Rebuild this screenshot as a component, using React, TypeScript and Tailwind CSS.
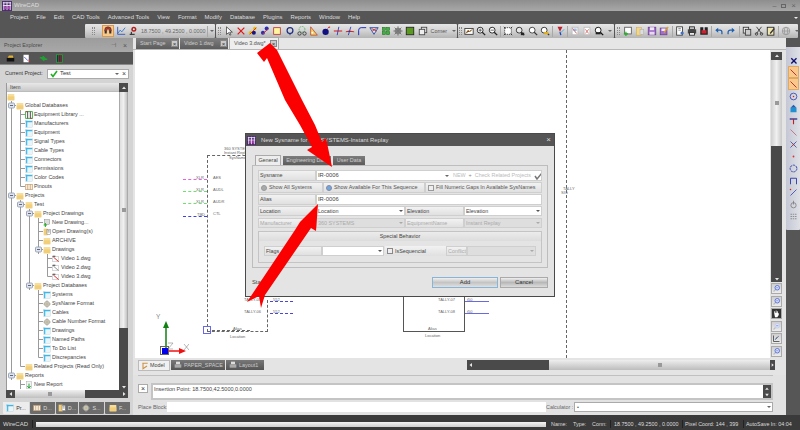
import React from "react";

const S = ({ s = 10, children }: { s?: number; children: React.ReactNode }) => (
  <svg width={s} height={s} viewBox="0 0 12 12" className="block shrink-0">{children}</svg>
);

const icons: Record<string, React.ReactNode> = {
  magnet: <><path d="M2 6V5a4 4 0 0 1 8 0v1h-2.500V5a1.500 1.500 0 0 0-3 0v1z" fill="#c0392b" stroke="#222" strokeWidth=".6"/><rect x="2" y="6" width="2.500" height="3" fill="#333"/><rect x="7.500" y="6" width="2.500" height="3" fill="#333"/></>,
  graph: <><path d="M2 1v9h9" stroke="#2a4fc0" fill="none" strokeWidth="1"/><path d="M2 9l3-4 2 2 4-5" stroke="#2a6fd0" fill="none" strokeWidth="1"/></>,
  magnetR: <><circle cx="7" cy="4" r="3" fill="#b02020"/><circle cx="7" cy="4" r="1.200" fill="#eee"/><path d="M2 10h6M4 7v3" stroke="#222" strokeWidth="1.200"/></>,
  cursor: <path d="M3 1v9l2.500-2 1.500 3 1.300-.6-1.500-3H10z" fill="#fff" stroke="#222" strokeWidth=".8"/>,
  x: <path d="M2 2l8 8M10 2l-8 8" stroke="#e01515" strokeWidth="1.400"/>,
  d1: <><circle cx="8" cy="3" r="2" fill="#f0c000"/><circle cx="3" cy="8" r="2" fill="#e8c000"/><circle cx="7" cy="8" r="2.400" fill="#151580"/><path d="M2 10l8-8" stroke="#d02020"/></>,
  d2: <><circle cx="8" cy="3" r="2.400" fill="#2030c0"/><circle cx="3.500" cy="8" r="2.400" fill="#2030c0"/><path d="M3 10l7-7" stroke="#e02020" strokeWidth="1.200"/></>,
  note: <rect x="2" y="2" width="8" height="8" fill="#fff6a0" stroke="#c03030"/>,
  ring: <><circle cx="6" cy="5.500" r="3.500" fill="none" stroke="#203080" strokeWidth="1.500"/><path d="M6 9v2" stroke="#203080"/></>,
  bike: <><circle cx="6" cy="4" r="3.500" fill="none" stroke="#30a040" strokeDasharray="1 1"/><circle cx="3" cy="9" r="2" fill="none" stroke="#333"/><circle cx="9" cy="9" r="2" fill="none" stroke="#333"/></>,
  tri: <><path d="M2 1l8 10H2z" fill="#f3d060" stroke="#b03020" strokeWidth=".8"/><rect x="3" y="7" width="2" height="2" fill="#fff"/></>,
  bomb: <><circle cx="5.500" cy="7" r="3.800" fill="#101080"/><path d="M8 3l2-2" stroke="#d03030" strokeWidth="1.200"/><circle cx="10" cy="1.500" r="1" fill="#e04040"/></>,
  cross: <><path d="M1 6h10" stroke="#e01515" strokeWidth="1.200"/><path d="M7 1L5 11" stroke="#2030c0" strokeWidth="1"/></>,
  bend: <><path d="M1 7l4-1 6 1" stroke="#e01515"/><path d="M7 1L4 11" stroke="#2030c0"/></>,
  arc: <path d="M2 11V5a3 3 0 0 1 3-3h6" stroke="#2030c0" fill="none" strokeWidth="1.200"/>,
  shield: <><path d="M1 2h10L6 10z" fill="#cfe8f5" stroke="#2040a0"/><path d="M3 3l6 3M9 3L4 6" stroke="#d02020"/></>,
  grid: <><rect x="1.500" y="1.500" width="4" height="4" fill="#40b040" stroke="#186018" strokeWidth=".5"/><rect x="6.500" y="1.500" width="4" height="4" fill="#40b040" stroke="#186018" strokeWidth=".5"/><rect x="1.500" y="6.500" width="4" height="4" fill="#40b040" stroke="#186018" strokeWidth=".5"/><rect x="6.500" y="6.500" width="4" height="4" fill="#40b040" stroke="#186018" strokeWidth=".5"/></>,
  gear: <><circle cx="6" cy="6" r="4" fill="#888"/><path d="M6 .5v11M.5 6h11M2 2l8 8M10 2l-8 8" stroke="#777" strokeWidth="1.200"/></>,
  sq: <><rect x="1.500" y="1.500" width="9" height="9" fill="#5a9a20" stroke="#222"/></>,
  layers: <><rect x="4" y="1.500" width="6.500" height="6.500" fill="#ddd" stroke="#444"/><rect x="1.500" y="4" width="6.500" height="6.500" fill="#eee" stroke="#444"/></>,
  rule: <><rect x="1" y="3" width="10" height="7" fill="#fff" stroke="#333"/><path d="M2 9l3-4 2 2 3-3" stroke="#c07010"/></>,
  zin: <><circle cx="5" cy="5" r="3.500" fill="#fff" stroke="#222" strokeWidth="1.100"/><path d="M7.500 7.500l3.500 3.500" stroke="#222" strokeWidth="1.500"/><path d="M3 5h4M5 3v4" stroke="#222" strokeWidth=".8"/></>,
  zout: <><circle cx="5" cy="5" r="3.500" fill="#fff" stroke="#222" strokeWidth="1.100"/><path d="M7.500 7.500l3.500 3.500" stroke="#222" strokeWidth="1.500"/><path d="M3 5h4" stroke="#222" strokeWidth=".8"/></>,
  frame: <><rect x="2" y="2" width="8" height="8" fill="#fff" stroke="#333" strokeDasharray="1.500 1"/><path d="M1 1l2 2M11 1L9 3M1 11l2-2M11 11L9 9" stroke="#222"/></>,
  zbk: <><circle cx="5" cy="5" r="3.500" fill="#e8e8e8" stroke="#222"/><path d="M7.500 7.500l3.500 3.500" stroke="#222" strokeWidth="1.500"/><rect x="7" y="8" width="4" height="3" fill="#222"/></>,
  zw: <><circle cx="5" cy="5" r="3.500" fill="#fff" stroke="#333"/><path d="M7.500 7.500l3.500 3.500" stroke="#333" strokeWidth="1.300"/></>,
  zy: <><circle cx="5" cy="5" r="3.500" fill="#fff" stroke="#222"/><path d="M7.500 7.500l3.500 3.500" stroke="#222" strokeWidth="1.300"/><rect x="5" y="7" width="5" height="3" fill="#e0b020"/></>,
  prop: <><path d="M3 1l3 6 3-6z" fill="#c02030"/><path d="M6 7l1 4" stroke="#2040c0" strokeWidth="1.500"/><path d="M7 8l4-4" stroke="#30b0d0"/></>,
  page1: <><rect x="2.500" y="1.500" width="7" height="9" fill="#fff" stroke="#bbb"/><path d="M3 3l5 6" stroke="#d04040"/><rect x="4" y="3" width="4" height="3" fill="#6090d0" opacity=".6"/></>,
  page2: <><rect x="2.500" y="1.500" width="7" height="9" fill="#fff" stroke="#bbb"/><path d="M4 4l4 5M8 4l-4 5" stroke="#d06060"/></>,
  zoomb: <><circle cx="5" cy="5" r="3.500" fill="#fff" stroke="#111" strokeWidth="1.100"/><path d="M7.500 7.500l3.500 3.500" stroke="#111" strokeWidth="1.500"/><rect x="2" y="7.500" width="6" height="2.500" fill="#222"/></>,
  newd: <><rect x="2" y="1.500" width="8" height="8" fill="#fff" stroke="#555"/><path d="M1 9.500h5M3.500 7v5" stroke="#20b020" strokeWidth="1.400"/></>,
  open: <><rect x="1.500" y="2" width="6" height="9" fill="#f2d68a" stroke="#c8a850" strokeWidth=".6"/><rect x="6" y="4" width="4.500" height="6" fill="#ddd" stroke="#aaa" strokeWidth=".6"/></>,
  save: <><rect x="1.500" y="1.500" width="9" height="9" fill="#a070c8" stroke="#704098"/><rect x="3.500" y="1.500" width="5" height="3.500" fill="#f0e8f8"/><rect x="3" y="7" width="6" height="3.500" fill="#e8d8f0"/></>,
  saveas: <><rect x="1.500" y="2.500" width="8" height="8" fill="#a070c8" stroke="#704098"/><rect x="3" y="3" width="5" height="3" fill="#f0e8f8"/><path d="M6 8l5-7" stroke="#e0a020" strokeWidth="1.500"/></>,
  print: <><rect x="2" y="1" width="7" height="10" fill="#fff" stroke="#333"/><path d="M4 3h3M4 5h3" stroke="#333" strokeWidth=".6"/><circle cx="8.500" cy="8.500" r="2" fill="#4070c0"/></>,
  prev: <><rect x="3" y="1" width="6" height="3" fill="#ccc" stroke="#222"/><rect x="1" y="4" width="10" height="5" fill="#444"/><rect x="3" y="8" width="6" height="3" fill="#fff" stroke="#222"/></>,
  pub: <><rect x="1.500" y="1.500" width="9" height="9" fill="#222"/><rect x="3" y="5" width="6" height="4" fill="#d02030"/><path d="M6 0v5" stroke="#e8e8e8" strokeWidth="1.500"/></>,
  undo: <><path d="M3 5h4a2.500 2.500 0 0 1 2.500 2.500V10" stroke="#2060b0" fill="none" strokeWidth="1.500"/><path d="M5 2L1.500 5 5 8z" fill="#2060b0"/></>,
  redo: <><path d="M9 5H5a2.500 2.500 0 0 0-2.500 2.500V10" stroke="#2060b0" fill="none" strokeWidth="1.500"/><path d="M7 2l3.500 3L7 8z" fill="#2060b0"/></>,
  copy: <><rect x="1.500" y="1.500" width="6.500" height="7" fill="#eee" stroke="#333"/><rect x="4" y="4" width="6.500" height="7" fill="#ccc" stroke="#333"/></>,
  cut: <><path d="M3 1l6 8M9 1L3 9" stroke="#333" strokeWidth="1"/><circle cx="3" cy="9.500" r="1.500" fill="none" stroke="#333"/><circle cx="9" cy="9.500" r="1.500" fill="none" stroke="#333"/></>,
  paste: <><rect x="1.500" y="1.500" width="8" height="9.500" fill="#f0e6b0" stroke="#222"/><path d="M5 9l5-6" stroke="#333" strokeWidth="1.500"/></>,
  globe: <><circle cx="6" cy="6" r="4.500" fill="none" stroke="#999" strokeWidth="1.100"/><ellipse cx="6" cy="6" rx="2" ry="4.500" fill="none" stroke="#999"/><path d="M1.500 6h9" stroke="#999"/></>,
};

const TI = ({ n, w = "w-[12.1px]", on }: { n: string; w?: string; on?: boolean }) => (
  <span className={`${w} h-[12px] flex items-center justify-center shrink-0 ${on ? "bg-[#f8c98a] border border-[#d89a50]" : ""}`}>
    <S s={10}>{icons[n]}</S>
  </span>
);

const Grip = ({ w }: { w: string }) => (
  <span className={`${w} flex items-center justify-center shrink-0`}>
    <span className="w-[3px] h-[8px] border-x border-dotted border-[#8a8a8a]" />
  </span>
);
const Arrow = ({ w = "w-[6px]", c = "border-t-[#666]" }: { w?: string; c?: string }) => (
  <span className={`${w} flex items-center justify-center shrink-0`}>
    <span className={`w-0 h-0 border-x-[2px] border-x-transparent border-t-[2px] ${c}`} />
  </span>
);
const Sep = ({ m = "mx-px" }: { m?: string }) => <span className={`w-px h-[11px] bg-[#a8a8a8] shrink-0 ${m}`} />;

const Bar = ({ w, children }: { w: string; children: React.ReactNode }) => (
  <div className={`${w} h-[14px] flex items-center shrink-0 rounded-[1px] bg-linear-to-b from-[#e6e6e6] via-[#d2d2d2] to-[#b4b4b4]`}>{children}</div>
);

const Logo = ({ s = 11 }: { s?: number }) => (
  <svg width={s} height={s} viewBox="0 0 11 11" className="block shrink-0">
    <rect width="11" height="11" fill="#4a2a70" />
    <path d="M1 2h9M2 1v9M5.500 1v9M9 1v9M1 5h9" stroke="#e8e0f0" strokeWidth="1.100" />
    <rect x="3" y="6" width="2" height="3" fill="#c040c0" />
    <rect x="6.500" y="6" width="2" height="3" fill="#c040c0" />
  </svg>
);

type TreeKind = "folder" | "table" | "lib" | "pin" | "new" | "open" | "dwg" | "dwg2" | "gear" | "rep";
const TreeIcon = ({ k }: { k: TreeKind }) => {
  const m: Record<TreeKind, React.ReactNode> = {
    folder: <><rect x="1" y="1.500" width="10" height="9.500" rx=".6" fill="#f6dd9c" /><rect x="1" y="5" width="10" height="6" fill="#f1cf7a" /></>,
    table: <><rect x="1" y="1" width="10" height="10" fill="#e8f6fb" stroke="#b0c8d0" strokeWidth=".5" /><path d="M1 2.500h10M2.500 1v10" stroke="#3fb6e8" strokeWidth="1.800" /></>,
    lib: <><rect x="1" y="1" width="10" height="10" fill="#fff" stroke="#20a020" strokeWidth="1.200" /><path d="M4 1v10M8 1v10" stroke="#222" strokeWidth="1.200" /><path d="M1 1h3M8 11h3" stroke="#d02020" /></>,
    pin: <><rect x="1" y="2" width="10" height="8" fill="#f8ecd8" stroke="#c09a70" /><path d="M4 2v8M8 2v8" stroke="#c09a70" /></>,
    new: <><rect x="2" y="1" width="8" height="7" fill="#ddd" stroke="#777" strokeWidth=".6" /><path d="M1 9h5M3.500 6v6" stroke="#20b020" strokeWidth="1.600" /></>,
    open: <><rect x="1" y="1" width="6" height="10" fill="#f1cf7a" /><rect x="6" y="2" width="5" height="8" fill="#fff" stroke="#555" strokeWidth=".6" /><path d="M7 4h3M7 6h3" stroke="#333" strokeWidth=".7" /></>,
    dwg: <><rect x="1" y="2" width="9" height="8" fill="#fff" stroke="#999" strokeWidth=".6" /><path d="M2 3l8 7" stroke="#e02020" strokeWidth="1.400" /><rect x="1" y="1" width="4" height="2" fill="#666" /></>,
    dwg2: <><rect x="1" y="2" width="9" height="8" fill="#fff" stroke="#999" strokeWidth=".6" /><path d="M2 3l8 7" stroke="#777" strokeWidth="1.200" /><rect x="1" y="1" width="4" height="2" fill="#666" /></>,
    gear: <><circle cx="6" cy="6" r="4" fill="#d8d0b0" stroke="#999" strokeWidth=".8" /><path d="M6 0v12M0 6h12" stroke="#aaa" /></>,
    rep: <><rect x="2" y="1" width="8" height="10" fill="#f2f2f2" stroke="#999" strokeWidth=".6" /><path d="M6 4v6M3.500 7.500L6 10.500l2.500-3" stroke="#18a030" strokeWidth="1.400" fill="none" /></>,
  };
  return <S s={8}>{m[k]}</S>;
};

const Guide = ({ c }: { c: string }) => (
  <svg width="9" height="9" viewBox="0 0 9 9" className="block shrink-0">
    {(c === "v" || c === "e" || c === "x") && <path d="M4.500 0v9" stroke="#9a9a9a" />}
    {c === "l" && <path d="M4.500 0v4.500" stroke="#9a9a9a" />}
    {(c === "e" || c === "l") && <path d="M4.500 4.500H9" stroke="#9a9a9a" />}
    {c === "x" && (
      <>
        <rect x="1.500" y="2" width="6" height="5" rx="1" fill="#dfe6f2" stroke="#8c96aa" strokeWidth=".8" />
        <path d="M3 4.500h3" stroke="#445" strokeWidth=".8" />
        <path d="M7.500 4.500H9" stroke="#9a9a9a" />
      </>
    )}
  </svg>
);

const treeRows: [string, TreeKind, string][] = [
  ["", "folder", ""],
  ["x", "folder", "Global Databases"],
  ["ve", "lib", "Equipment Library ..."],
  ["ve", "table", "Manufacturers"],
  ["ve", "table", "Equipment"],
  ["ve", "table", "Signal Types"],
  ["ve", "table", "Cable Types"],
  ["ve", "table", "Connectors"],
  ["ve", "table", "Permissions"],
  ["ve", "table", "Color Codes"],
  ["vl", "pin", "Pinouts"],
  ["x", "folder", "Projects"],
  ["vx", "folder", "Test"],
  ["vvx", "folder", "Project Drawings"],
  ["vvve", "new", "New Drawing..."],
  ["vvve", "open", "Open Drawing(s)"],
  ["vvve", "folder", "ARCHIVE"],
  ["vvvx", "folder", "Drawings"],
  ["vvv e", "dwg", "Video 1.dwg"],
  ["vvv e", "dwg2", "Video 2.dwg"],
  ["vvv l", "dwg", "Video 3.dwg"],
  ["vvx", "folder", "Project Databases"],
  ["vv e", "table", "Systems"],
  ["vv e", "gear", "SysName Format"],
  ["vv e", "table", "Cables"],
  ["vv e", "gear", "Cable Number Format"],
  ["vv e", "table", "Drawings"],
  ["vv e", "table", "Named Paths"],
  ["vv e", "table", "To Do List"],
  ["vv l", "table", "Discrepancies"],
  ["vl", "folder", "Related Projects (Read Only)"],
  ["x", "folder", "Reports"],
  [" e", "rep", "New Report"],
];

const UpBtn = ({ d }: { d: "u" | "d" | "l" | "r" }) => {
  const p = { u: "M1 4l2-2.500L5 4z", d: "M1 2l2 2.500L5 2z", l: "M4 1L1.500 3 4 5z", r: "M2 1l2.500 2L2 5z" }[d];
  return <svg width="6" height="6" viewBox="0 0 6 6" className="block"><path d={p} fill="#e8e8e8" /></svg>;
};

const Explorer = () => (
  <div className="w-[133px] shrink-0 flex flex-col bg-[#d4d4d4]">
    <div className="h-[14px] bg-linear-to-b from-[#9c9c9c] to-[#a8a8a8] flex items-center pl-[4px] pr-[6px] text-[5.400px] text-[#4a4a4a]">
      <span className="flex-1">Project Explorer</span>
      <span className="mr-[7px] text-[6px] leading-none text-[#555]">⊣</span>
      <span className="text-[7px] leading-none text-[#555]">×</span>
    </div>
    <div className="h-[13px] bg-[#555] flex items-center border-b border-[#8a8a8a]">
      <span className="ml-[6px]"><S s={9}><><rect x="1" y="5" width="10" height="5" fill="#111" /><path d="M2 5l2-3h5l1 3z" fill="#e0b030" /></></S></span>
      <span className="ml-[7px]"><S s={9}><><rect x="2" y="1" width="7" height="10" fill="#fff" /><path d="M3 4l5 5" stroke="#3040d0" /><path d="M9 7l2 2-2 2z" fill="#d03030" /></></S></span>
      <span className="ml-[8px]"><S s={9}><path d="M1 5h6l-2-2M11 7H5l2 2" stroke="#20a030" strokeWidth="2" fill="none" /></S></span>
      <span className="ml-[7px]"><S s={9}><><rect x="2" y="1" width="8" height="10" fill="#134" stroke="#20b030" /><path d="M5 1v10M8 1v10" stroke="#d03030" /></></S></span>
    </div>
    <div className="h-[17px] flex items-center pl-[5px] text-[5.400px] text-[#333] whitespace-nowrap">
      <span className="w-[42px]">Current Project:</span>
      <div className="w-[82px] h-[10px] bg-white border border-[#aaa] flex items-center pl-[2px]">
        <svg width="8" height="8" viewBox="0 0 8 8" className="block shrink-0"><path d="M1 4l2 2.500L7 1" stroke="#20b020" strokeWidth="1.600" fill="none" /></svg>
        <span className="ml-[2px] flex-1 text-[5.800px] text-[#333]">Test</span>
        <Arrow />
        <span className="w-[8px] text-center text-[7px] leading-none text-[#444]">×</span>
      </div>
    </div>
    <div className="flex-1 flex flex-col pl-[6px] pr-[5px] min-h-0 pt-[1px]">
      <div className="h-[307px] flex">
        <div className="flex-1 bg-white border-l border-[#999] flex flex-col overflow-hidden">
          <div className="h-[9px] bg-linear-to-b from-[#e8e8e8] to-[#c9c9c9] border-b border-[#bbb] text-[5.400px] leading-[8px] pl-[3px] text-[#444] shrink-0">Item</div>
          <div>
            {treeRows.map(([g, k, t], i) => (
              <div key={i} className="h-[9px] flex items-center whitespace-nowrap">
                {g.split("").map((c, j) => <Guide key={j} c={c} />)}
                <span className="w-[9px] shrink-0 flex justify-start"><TreeIcon k={k} /></span>
                <span className="text-[5.400px] leading-[9px] text-[#444]">{t}</span>
              </div>
            ))}
          </div>
        </div>
        <div className="w-[9px] flex flex-col shrink-0">
          <div className="h-[9px] bg-[#4a4a4a] flex items-center justify-center"><UpBtn d="u" /></div>
          <div className="h-[236px] bg-linear-to-r from-[#dedede] via-[#f0f0f0] to-[#c4c4c4] flex items-center justify-center border-x border-[#aaa]">
            <span className="w-[4px] h-[4px] bg-[#999]" />
          </div>
          <div className="flex-1 bg-[#4a4a4a] flex items-end justify-center"><UpBtn d="d" /></div>
        </div>
      </div>
      <div className="h-[8px] flex">
        <div className="w-[9px] bg-[#4a4a4a] flex items-center justify-center"><UpBtn d="l" /></div>
        <div className="w-[70px] bg-linear-to-b from-[#f0f0f0] to-[#c0c0c0] flex items-center justify-center"><span className="w-[4px] h-[4px] bg-[#999]" /></div>
        <div className="flex-1 bg-[#4a4a4a] flex items-center justify-end pr-[1px]"><UpBtn d="r" /></div>
      </div>
    </div>
    <div className="h-[13px] flex items-start pl-[3px] bg-[#d4d4d4] shrink-0 text-[5.400px] text-[#ddd] gap-px">
      {[
        ["Pr...", "table", "w-[26px]"],
        ["D...", "pin", "w-[25px]"],
        ["D...", "open", "w-[22px]"],
        ["S...", "gear", "w-[25px]"],
        ["F...", "folder", "w-[25px]"],
      ].map(([t, k, w], i) => (
        <div key={i} className={`${w} h-[12px] flex items-center justify-center gap-[2px] rounded-b-[1px] ${i === 0 ? "bg-[#ececec] text-[#333]" : "bg-[#6c6c6c]"}`}>
          <TreeIcon k={k as TreeKind} />
          <span>{t}</span>
        </div>
      ))}
    </div>
  </div>
);

const Cx = () => (
  <span className="w-[7px] h-[7px] bg-[#c9c9c9] border border-[#888] flex items-center justify-center text-[6px] leading-none text-[#333] shrink-0">×</span>
);

const DocTabs = () => (
  <div className="h-[12px] bg-[#e6e6e6] flex items-end pl-[3px] gap-px border-b border-[#b8b8b8] shrink-0">
    <div className="w-[43px] h-[11px] bg-linear-to-b from-[#808080] to-[#5c5c5c] flex items-center pl-[4px] pr-[1px] text-[5.400px] text-[#ccc] gap-[2px]"><span className="flex-1 whitespace-nowrap">Start Page</span><Cx /></div>
    <div className="w-[48px] h-[11px] bg-linear-to-b from-[#808080] to-[#5c5c5c] flex items-center pl-[4px] pr-[1px] text-[5.400px] text-[#ccc] gap-[2px]"><span className="flex-1 whitespace-nowrap">Video 1.dwg</span><Cx /></div>
    <div className="w-[50px] h-[12px] bg-[#eeeeee] flex items-center pl-[4px] pr-[1px] text-[5.400px] text-[#555] gap-[2px] border-x border-t border-[#aaa]"><span className="flex-1 whitespace-nowrap">Video 3.dwg*</span><Cx /></div>
  </div>
);

const Lbl = ({ x, y, c = "text-[#666]", children }: { x: number; y: number; c?: string; children: React.ReactNode }) => (
  <span className={`absolute text-[4px] leading-[5px] whitespace-nowrap ${c}`} style={{ left: x - 135, top: y - 50 }}>{children}</span>
);
const Ln = ({ x, y, w, c }: { x: number; y: number; w: number; c: string }) => (
  <span className={`absolute h-0 border-t border-dashed ${c}`} style={{ left: x - 135, top: y - 50, width: w }} />
);

const Canvas = () => (
  <div className="flex-1 relative bg-white overflow-hidden">
    <span className="absolute border-l border-t border-dashed border-[#666] left-[72px] top-[105px] w-[150px] h-[177px]" />
    <span className="absolute border-b border-r border-dashed border-[#666] left-[72px] top-[250px] w-[61px] h-[32px]" />
    <span className="absolute border-l border-dashed border-[#666] left-[431px] top-0 h-[308px]" />
    <span className="absolute left-[268px] top-[246px] w-[62px] h-[36px] border border-[#555] border-t-0" />
    <Ln x={183} y={179} w={24} c="border-[#e860e0]" />
    <Ln x={183} y={191} w={24} c="border-[#70e070]" />
    <Ln x={183} y={203} w={24} c="border-[#70e070]" />
    <Ln x={183} y={216} w={24} c="border-[#4040e0]" />
    <Lbl x={196} y={175}>XLR</Lbl>
    <Lbl x={196} y={187}>XLR</Lbl>
    <Lbl x={196} y={199}>XLR</Lbl>
    <Lbl x={197} y={212}>TBD</Lbl>
    <Lbl x={213} y={175}>AES</Lbl>
    <Lbl x={213} y={187}>AUDL</Lbl>
    <Lbl x={213} y={199}>AUDR</Lbl>
    <Lbl x={213} y={211}>CTL</Lbl>
    <Lbl x={224} y={146}>360 SYSTEMS</Lbl>
    <Lbl x={224} y={150}>Instant Replay</Lbl>
    <Lbl x={229} y={155}>SysName</Lbl>
    <Lbl x={244} y={297}>TALLY-05</Lbl>
    <Lbl x={244} y={309}>TALLY-06</Lbl>
    <Ln x={270} y={301} w={23} c="border-[#4848d8]" />
    <Ln x={270} y={313} w={23} c="border-[#4848d8]" />
    <Lbl x={273} y={297}>552</Lbl>
    <Lbl x={273} y={309}>552</Lbl>
    <Lbl x={438} y={297}>TALLY-07</Lbl>
    <Lbl x={438} y={309}>TALLY-08</Lbl>
    <span className="absolute left-[330px] top-[251px] w-[24px] h-px bg-[#6a6ae0]" />
    <span className="absolute left-[330px] top-[263px] w-[24px] h-px bg-[#6a6ae0]" />
    <Lbl x={467} y={297}>t50</Lbl>
    <Lbl x={467} y={309}>t50</Lbl>
    <Lbl x={428} y={326}>Alias</Lbl>
    <Lbl x={425} y={333}>Location</Lbl>
    <Lbl x={563} y={186}>TALLY</Lbl>
    <Lbl x={561} y={190}>SIG</Lbl>
    <span className="absolute left-[68px] top-[276px] w-[8px] h-[8px] border border-[#6a6ae0]" />
    <span className="absolute left-[77px] top-[280px] w-[38px] h-0 border-t border-dashed border-[#666]" />
    <Lbl x={233} y={326}>Alias</Lbl>
    <Lbl x={230} y={334}>Location</Lbl>
    <svg className="absolute left-[10px] top-[270px]" width="44" height="38" viewBox="0 0 44 38">
      <path d="M21 5v24" stroke="#108010" strokeWidth="1.500" />
      <path d="M21 1l-3 7h6z" fill="#108010" />
      <path d="M21 31h16" stroke="#f01010" strokeWidth="1.500" />
      <path d="M41 31l-7-3v6z" fill="#f01010" />
      <rect x="17" y="28" width="6" height="6" fill="#0000e8" />
      <rect x="15.500" y="26.500" width="8" height="8" fill="none" stroke="#666" />
      <path d="M23 23h5l-5 6h5M39 24l5 6M44 24l-5 6" stroke="#888" strokeWidth=".6" fill="none" />
    </svg>
    <span className="absolute left-[21px] top-[264px] text-[6.500px] leading-none text-[#888]">Y</span>
  </div>
);

const ZBtn = ({ k }: { k: string }) => (
  <div className="w-[11px] h-[11px] bg-linear-to-b from-[#cfcfcf] to-[#ececec] border border-[#aaa] flex items-center justify-center">
    <S s={9}>
      {k === "hand" ? (
        <><rect x="0" y="0" width="12" height="12" fill="#333" /><path d="M3 6V3h1v2h1V2h1v3h1V3h1v3l1-1v3l-2 3H4z" fill="#fff" /></>
      ) : k === "plot" ? (
        <><path d="M2 10V2M2 10h8" stroke="#333" /><path d="M4 8l2-3 3-2" stroke="#2050c0" strokeDasharray="1 1" /></>
      ) : (
        <><path d="M2 10l3-3" stroke="#bbb" strokeWidth="1.500" /><circle cx="7" cy="5" r="3" fill="#dfe6ff" stroke={k === "pale" ? "#bcc8e8" : "#3a54d0"} /><path d="M5.500 5h3" stroke="#3a54d0" strokeWidth=".7" /></>
      )}
    </S>
  </div>
);

const RIcon = ({ children, on }: { children: React.ReactNode; on?: boolean }) => (
  <span className={`w-[11px] h-[12px] flex items-center justify-center ${on ? "bg-[#f8c98a] border border-[#e0a860]" : ""}`}><S s={9}>{children}</S></span>
);

const RightTools = () => (
  <div className="w-[14px] shrink-0 bg-[#565656] flex flex-col">
    <div className="h-[9px]" />
    <div className="h-[183px] bg-linear-to-r from-[#c4c8d4] to-[#dfe0e6] rounded-b-[1px] flex flex-col items-center pt-[7px]">
      <RIcon><path d="M3 3l7 7M10 3l-7 7" stroke="#101070" strokeWidth="1.800" /></RIcon>
      <RIcon on><path d="M2 2l8 8" stroke="#c02020" strokeWidth="1.200" /></RIcon>
      <RIcon on><path d="M2 2l8 8" stroke="#c02020" strokeWidth="1.200" /></RIcon>
      <RIcon><><circle cx="6" cy="6" r="4.500" fill="none" stroke="#2838a8" /><circle cx="6" cy="6" r="1" fill="#d02020" /></></RIcon>
      <RIcon><><rect x="2" y="5" width="8" height="6" fill="#2090d0" /><path d="M2 5l4-4 4 4" fill="#2060b0" /></></RIcon>
      <RIcon><><path d="M1 4h10" stroke="#101080" strokeWidth="1.500" /><path d="M6 4v7" stroke="#c02020" strokeWidth="1.500" /></></RIcon>
      <RIcon><path d="M2 2l8 8" stroke="#c07080" strokeWidth="1.200" /></RIcon>
      <RIcon><><path d="M2 2l8 8M10 2l-8 8" stroke="#303890" /><circle cx="6" cy="6" r="1" fill="#d02020" /></></RIcon>
      <RIcon><circle cx="6" cy="6" r="1.200" fill="#e03030" /></RIcon>
      <RIcon><circle cx="6" cy="6" r="4.500" fill="none" stroke="#2838a8" strokeWidth="1.200" strokeDasharray="3 1" /></RIcon>
      <RIcon><path d="M2 11V3h8v8" fill="none" stroke="#2838a8" strokeWidth="1.200" /></RIcon>
      <RIcon><><path d="M2 10l8-8" stroke="#2838a8" /><circle cx="2" cy="2" r="1" fill="#d02020" /></></RIcon>
      <RIcon><><circle cx="6" cy="7" r="3.500" fill="none" stroke="#777" /><path d="M6 1v5" stroke="#777" /></></RIcon>
      <RIcon><path d="M2 3h8M2 6h8M2 9h8" stroke="#777" strokeDasharray="2 1" /></RIcon>
    </div>
  </div>
);

const LabelCell = ({ w, dim, children }: { w: string; dim?: boolean; children: React.ReactNode }) => (
  <div className={`${w} h-full shrink-0 flex items-center pl-[1px] bg-linear-to-b from-[#f2f2f2] to-[#e0e0e0] border border-[#cfcfcf] text-[5.400px] whitespace-nowrap overflow-hidden ${dim ? "text-[#aaa]" : "text-[#444]"}`}>{children}</div>
);
const Field = ({ w, dim, arrow, children }: { w: string; dim?: boolean; arrow?: boolean; children?: React.ReactNode }) => (
  <div className={`${w} h-full flex items-center pl-[1px] border border-[#cfcfcf] text-[5.400px] whitespace-nowrap overflow-hidden ${dim ? "bg-[#dedede] text-[#aaa]" : "bg-white text-[#444]"}`}>
    <span className="flex-1">{children}</span>
    {arrow && <Arrow c={dim ? "border-t-[#aaa]" : "border-t-[#555]"} />}
  </div>
);

const Dialog = () => (
  <div className="absolute left-[245px] top-[133px] w-[310px] h-[164px] bg-[#e4e4e4] border-[1.500px] border-[#4a4a4a] flex flex-col z-10">
    <div className="h-[12px] bg-[#555] flex items-center pl-[1px] pr-[3px] text-[5.900px] text-[#dcdcdc] shrink-0">
      <Logo s={9} />
      <span className="ml-[5px] flex-1 whitespace-nowrap">New Sysname for 360 SYSTEMS-Instant Replay</span>
      <span className="text-[8px] leading-none">×</span>
    </div>
    <div className="flex items-end h-[10px] mt-[9px] pl-[9px] gap-[2px] text-[5.400px] shrink-0 whitespace-nowrap">
      <div className="w-[26px] h-[10px] bg-[#ededed] border border-b-0 border-[#aaa] flex items-center justify-center text-[#444]">General</div>
      <div className="w-[48px] h-[9px] bg-linear-to-b from-[#7c7c7c] to-[#5c5c5c] flex items-center justify-center text-[#ccc]">Engineering Data</div>
      <div className="w-[32px] h-[9px] bg-linear-to-b from-[#7c7c7c] to-[#5c5c5c] flex items-center justify-center text-[#ccc]">User Data</div>
    </div>
    <div className="mx-[6px] h-[103px] border border-[#bdbdbd] bg-[#e4e4e4] px-[5px] pt-[4px] flex flex-col shrink-0">
      <div className="flex h-[11px]">
        <LabelCell w="w-[58px]">Sysname</LabelCell>
        <Field w="flex-1 min-w-0">
          <span className="flex items-center">
            <span className="text-[5.800px] w-[126px]">IR-0006</span>
            <Arrow />
            <span className="ml-[3px] text-[#bbb]">NEW</span>
            <span className="ml-[3px] text-[#888]">+</span>
            <span className="ml-[3px] text-[#bbb]">Check Related Projects</span>
            <svg width="9" height="8" viewBox="0 0 9 8" className="ml-[3px] block"><path d="M1 4l2 3 5-6" stroke="#777" strokeWidth="1.500" fill="none" /></svg>
          </span>
        </Field>
      </div>
      <div className="flex h-[11px] mt-[1px] text-[5.400px] text-[#555] whitespace-nowrap">
        <div className="w-[65px] bg-linear-to-b from-[#f2f2f2] to-[#e0e0e0] border border-[#cfcfcf] flex items-center pl-[2px] gap-[2px]"><span className="w-[6px] h-[6px] rounded-full bg-[#aaa] border border-[#999] shrink-0" />Show All Systems</div>
        <div className="w-[102px] bg-linear-to-b from-[#f2f2f2] to-[#e0e0e0] border border-[#cfcfcf] flex items-center pl-[2px] gap-[2px]"><span className="w-[6px] h-[6px] rounded-full bg-[#70a8d8] border border-[#88a] shrink-0" />Show Available For This Sequence</div>
        <div className="flex-1 bg-linear-to-b from-[#f2f2f2] to-[#e0e0e0] border border-[#cfcfcf] flex items-center pl-[2px] gap-[2px]"><span className="w-[6px] h-[6px] bg-[#eee] border border-[#999] shrink-0" />Fill Numeric Gaps In Available SysNames</div>
      </div>
      <div className="flex h-[11px] mt-[1px]">
        <LabelCell w="w-[58px]">Alias</LabelCell>
        <Field w="flex-1 min-w-0"><span className="text-[5.800px]">IR-0006</span></Field>
      </div>
      <div className="flex h-[10px] mt-[1px]">
        <LabelCell w="w-[58px]">Location</LabelCell>
        <Field w="w-[89px]" arrow>Location</Field>
        <LabelCell w="w-[59px]">Elevation</LabelCell>
        <Field w="flex-1 min-w-0" arrow>Elevation</Field>
      </div>
      <div className="flex h-[10px] mt-[2px]">
        <LabelCell w="w-[58px]" dim>Manufacturer</LabelCell>
        <Field w="w-[89px]" dim arrow>360 SYSTEMS</Field>
        <LabelCell w="w-[59px]" dim>EquipmentName</LabelCell>
        <Field w="flex-1 min-w-0" dim arrow>Instant Replay</Field>
      </div>
      <div className="mt-[3px] h-[32px] border border-[#c4c4c4] flex flex-col">
        <div className="h-[9px] bg-linear-to-b from-[#ececec] to-[#dcdcdc] text-center text-[5.400px] leading-[9px] text-[#444]">Special Behavior</div>
        <div className="flex h-[10px] mt-[5px] mx-[5px]">
          <LabelCell w="w-[58px]">Flags</LabelCell>
          <Field w="w-[62px]" arrow />
          <div className="w-[61px] ml-px bg-linear-to-b from-[#f2f2f2] to-[#e0e0e0] flex items-center pl-[2px] gap-[2px] text-[5.400px] text-[#444]"><span className="w-[6px] h-[6px] bg-[#eee] border border-[#888]" />IsSequencial</div>
          <LabelCell w="w-[21px]" dim>Conflict</LabelCell>
          <Field w="flex-1 min-w-0" dim arrow />
        </div>
      </div>
    </div>
    <div className="flex items-center mx-[6px] mt-[9px] h-[11px] text-[5.800px] shrink-0">
      <span className="flex-1 text-[#444]">Status</span>
      <div className="w-[66px] h-[11px] bg-linear-to-b from-[#f0f0f0] via-[#c4c4c4] to-[#e0e0e0] border border-[#88b4d8] flex items-center justify-center text-[#333]">Add</div>
      <div className="ml-[2px] w-[48px] h-[11px] bg-linear-to-b from-[#f0f0f0] via-[#b8b8b8] to-[#dcdcdc] border border-[#aaa] flex items-center justify-center text-[#333]">Cancel</div>
    </div>
  </div>
);

const Arrows = () => (
  <svg className="absolute left-0 top-0 z-20 pointer-events-none" width="800" height="430" viewBox="0 0 800 430">
    <path d="M257 53L270 43L277 50L302 100L315 125L322 142L326 138L332 167L307 150L312 147L300 125L285 100L267 58L264 62Z" fill="#fa0000" />
    <path d="M318 204L316 231L311 228L265 295L261 308L259 296L247 302L295 230L300 222Z" fill="#fa0000" />
  </svg>
);

const ModelTabs = () => (
  <div className="h-[17px] flex items-start pl-[5px] pt-[2px] bg-[#e4e4e4] shrink-0 whitespace-nowrap">
    <div className="w-[32px] h-[11px] bg-[#f0f0f0] border border-[#bbb] flex items-center pl-[2px] gap-[1px] text-[5.400px] text-[#444] shrink-0">
      <S s={8}><path d="M2 2h8M3 2v8l6-4" stroke="#d09040" strokeWidth="1.600" fill="none" /></S>Model
    </div>
    <div className="ml-[1px] w-[54px] h-[10px] bg-linear-to-b from-[#787878] to-[#555] flex items-center pl-[3px] gap-[2px] text-[5.400px] text-[#ccc] shrink-0">
      <S s={8}><><rect x="3" y="1" width="6" height="4" fill="#ddd" /><rect x="1" y="5" width="10" height="5" fill="#aaa" /></></S>PAPER_SPACE
    </div>
    <div className="ml-[1px] w-[38px] h-[10px] bg-linear-to-b from-[#787878] to-[#555] flex items-center pl-[3px] gap-[2px] text-[5.400px] text-[#ccc] shrink-0">
      <S s={8}><><rect x="3" y="1" width="6" height="4" fill="#ddd" /><rect x="1" y="5" width="10" height="5" fill="#aaa" /></></S>Layout1
    </div>
    <div className="ml-[203px] w-[308px] h-[10px] flex shrink-0">
      <div className="w-[20px] bg-[#4a4a4a] flex items-center pl-[1px]"><UpBtn d="l" /></div>
      <div className="w-[62px] bg-[#4a4a4a]" />
      <div className="flex-1 bg-linear-to-b from-[#eeeeee] to-[#bdbdbd] flex items-center justify-center"><span className="w-[4px] h-[4px] bg-[#999]" /></div>
      <div className="w-[5px] bg-[#4a4a4a] flex items-center justify-center"><UpBtn d="r" /></div>
    </div>
  </div>
);

const Command = () => (
  <div className="flex-1 bg-[#e2e2e2] flex flex-col pl-[5px] pr-[13px] min-h-0">
    <div className="h-[4px] mb-[4px] shrink-0 border-t border-[#c0c0c0]" />
    <div className="flex h-[17px] shrink-0">
      <div className="w-[10px] h-[9px] mt-px bg-white border border-[#aaa] flex items-center justify-center text-[7px] leading-none text-[#333]">×</div>
      <div className="ml-[3px] flex-1 bg-white border-2 border-[#c4c4c4] flex">
        <span className="flex-1 text-[5.500px] leading-[7px] pl-px pt-[1px] text-[#444]">Insertion Point: 18.7500,42.5000,0.0000</span>
        <div className="w-[8px] bg-[#4a4a4a] flex flex-col items-center justify-between py-px"><UpBtn d="u" /><UpBtn d="d" /></div>
      </div>
    </div>
    <div className="flex items-center h-[10px] mt-[2px] text-[5.400px] text-[#666] shrink-0 whitespace-nowrap">
      <span className="w-[29px]">Place Block:</span>
      <div className="w-[379px] h-[10px] bg-white" />
      <span className="w-[28px]">Calculator :</span>
      <div className="flex-1 h-[10px] bg-white border border-[#aaa] flex items-center pl-[2px]">
        <span className="flex-1 text-[#555]">•</span><Arrow />
      </div>
    </div>
  </div>
);

const App = () => (
  <div className="relative w-[800px] h-[430px] overflow-hidden flex flex-col bg-[#555] font-['Liberation_Sans',sans-serif]">
    <div className="h-[11px] bg-linear-to-b from-[#8e8e8e] to-[#a8a8a8] flex items-center pl-[2px] pr-[4px] shrink-0">
      <Logo s={10} />
      <span className="ml-[2px] flex-1 text-[6px] text-[#dedede]">WireCAD</span>
      <span className="text-[7px] leading-none text-[#666] mr-[5px]">–</span>
      <span className="w-[5px] h-[4px] border border-[#666] mr-[5px]" />
      <span className="text-[8px] leading-none text-[#666]">×</span>
    </div>
    <div className="h-[13px] bg-[#565656] flex items-center pl-[10px] gap-[8px] text-[5.900px] text-[#dedede] shrink-0 whitespace-nowrap">
      {["Project", "File", "Edit", "CAD Tools", "Advanced Tools", "View", "Format", "Modify", "Database", "Plugins", "Reports", "Window", "Help"].map((m) => (
        <span key={m}>{m}</span>
      ))}
      <span className="ml-auto mr-[1px]"><Arrow c="border-t-[#eee]" /></span>
    </div>
    <div className="h-[14px] bg-[#565656] flex items-center pl-[85px] gap-px shrink-0">
      <Bar w="w-[130px]">
        <Grip w="w-[17px]" />
        <TI n="magnet" w="w-[12px]" on />
        <TI n="graph" w="w-[13px]" />
        <TI n="magnetR" w="w-[12px]" />
        <span className="ml-[2px] w-[64px] text-[5.400px] text-[#666] whitespace-nowrap">18.7500 , 49.2500 , 0.0000</span>
        <Sep m="ml-[2px]" />
        <Arrow w="w-[8px]" />
      </Bar>
      <Bar w="w-[241px]">
        <Grip w="w-[7px]" />
        {["cursor", "x", "d1", "d2", "note", "ring", "bike", "tri", "bomb", "cross", "bend", "arc", "shield", "grid", "gear", "sq", "layers"].map((n, i) => <TI key={i} n={n} />)}
        <span className="ml-[2px] w-[24px] text-[5.400px] text-[#555]">Corner</span>
        <Arrow />
      </Bar>
      <Bar w="w-[156px]">
        <Grip w="w-[5px]" />
        <TI n="rule" w="w-[12px]" />
        <TI n="zin" w="w-[12px]" />
        <TI n="zout" w="w-[12px]" />
        <Sep m="mx-[1px]" />
        <TI n="frame" w="w-[12px]" />
        <TI n="zbk" w="w-[12.500px]" />
        <TI n="zw" w="w-[12px]" />
        <TI n="zy" w="w-[12.500px]" />
        <Sep m="mx-[1px]" />
        <TI n="prop" w="w-[12px]" />
        <Sep m="mx-[1px]" />
        <TI n="page1" w="w-[12px]" />
        <TI n="page2" w="w-[12px]" />
        <TI n="zoomb" w="w-[12px]" />
        <Arrow w="w-[10px]" />
      </Bar>
      <Bar w="w-[183px]">
        <Grip w="w-[7px]" />
        <TI n="newd" w="w-[12px]" />
        <TI n="open" w="w-[12px]" />
        <TI n="save" w="w-[12px]" />
        <TI n="saveas" w="w-[12px]" />
        <Sep m="mx-[1.500px]" />
        <TI n="print" w="w-[12px]" />
        <TI n="prev" w="w-[12px]" />
        <TI n="pub" w="w-[12px]" />
        <Sep m="mx-[1px]" />
        <TI n="undo" w="w-[12px]" />
        <TI n="redo" w="w-[12px]" />
        <Sep m="mx-[1.500px]" />
        <TI n="copy" w="w-[12px]" />
        <TI n="cut" w="w-[12px]" />
        <TI n="paste" w="w-[12px]" />
        <Sep m="mx-[1px]" />
        <TI n="globe" w="w-[12px]" />
        <Arrow w="w-[10px]" />
      </Bar>
    </div>
    <div className="h-[377px] flex shrink-0">
      <Explorer />
      <div className="flex-1 flex flex-col min-w-0 bg-[#e4e4e4]">
        <DocTabs />
        <div className="h-[308px] flex pl-[2px] shrink-0">
          <Canvas />
          <div className="w-[16px] flex flex-col shrink-0 pl-[1px] pr-[4px] pt-[2px]">
            <div className="h-[8px] bg-[#4a4a4a] flex items-center justify-center"><UpBtn d="u" /></div>
            <div className="h-[86px] bg-linear-to-r from-[#d0d0d0] via-[#f0f0f0] to-[#c8c8c8] flex items-center justify-center"><span className="w-[4px] h-[4px] bg-[#999]" /></div>
            <div className="h-[136px] bg-[#4a4a4a] flex items-end justify-center"><UpBtn d="d" /></div>
            <div className="flex flex-col gap-[1.500px] mt-[1px]">
              {["z", "z", "hand", "pale", "plot", "z"].map((k, i) => <ZBtn key={i} k={k} />)}
            </div>
          </div>
        </div>
        <ModelTabs />
        <Command />
      </div>
      <RightTools />
    </div>
    <div className="h-[15px] bg-[#3a3a3a] flex items-center text-[5.400px] text-[#dcdcdc] shrink-0 whitespace-nowrap pt-[3px]">
      <span className="pl-[3px] w-[32px] text-[6px]">WireCAD</span>
      <span className="w-px h-[8px] bg-[#222]" />
      <div className="ml-[3px] w-[510px] h-[5px] bg-linear-to-b from-[#f4f4f4] to-[#cfcfcf]" />
      <span className="ml-[5px] w-[19px]">Name:</span>
      <span className="ml-[3px] w-[16px]">Type:</span>
      <span className="ml-[3px] w-[18px]">Conn:</span>
      <span className="w-px h-[8px] bg-[#222]" />
      <span className="ml-[3px] w-[68px]">18.7500 , 49.2500 , 0.0000</span>
      <span className="w-px h-[8px] bg-[#222]" />
      <span className="ml-[2px] w-[58px]">Pixel Coord: 144 , 399</span>
      <span className="w-px h-[8px] bg-[#222]" />
      <span className="ml-[2px]">AutoSave In: 04:04</span>
    </div>
    <Dialog />
    <Arrows />
  </div>
);

export default App;
